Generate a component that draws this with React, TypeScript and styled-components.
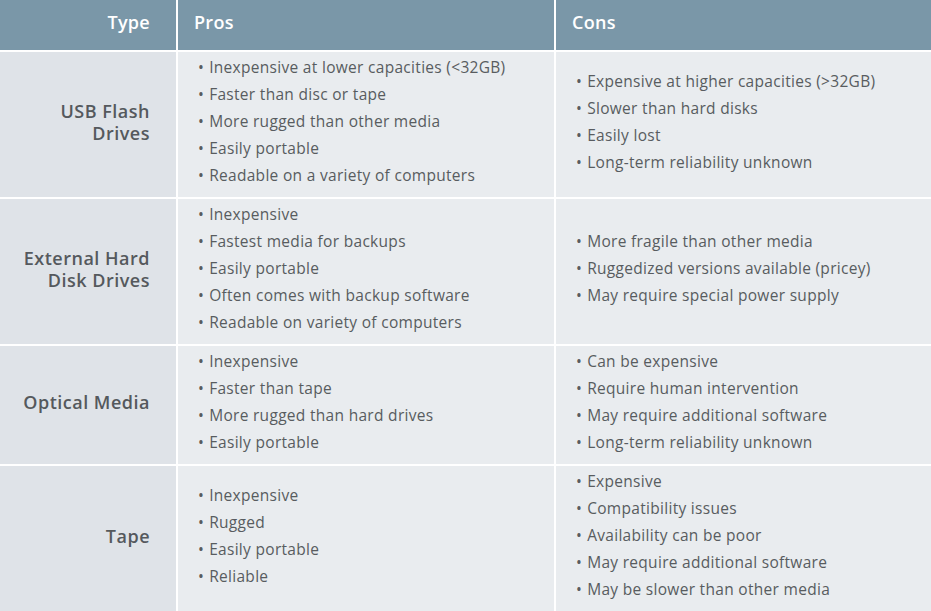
import React from 'react';
import styled, { createGlobalStyle } from 'styled-components';

const GlobalStyle = createGlobalStyle`
  html, body {
    margin: 0;
    padding: 0;
    background: #ffffff;
  }
  body {
    font-family: 'Open Sans', 'Liberation Sans', sans-serif;
    color: #585c60;
  }
`;

interface RowData {
  type: string[];
  pros: string[];
  cons: string[];
}

const rows: RowData[] = [
  {
    type: ['USB Flash', 'Drives'],
    pros: [
      'Inexpensive at lower capacities (<32GB)',
      'Faster than disc or tape',
      'More rugged than other media',
      'Easily portable',
      'Readable on a variety of computers'
    ],
    cons: [
      'Expensive at higher capacities (>32GB)',
      'Slower than hard disks',
      'Easily lost',
      'Long-term reliability unknown'
    ]
  },
  {
    type: ['External Hard', 'Disk Drives'],
    pros: [
      'Inexpensive',
      'Fastest media for backups',
      'Easily portable',
      'Often comes with backup software',
      'Readable on variety of computers'
    ],
    cons: [
      'More fragile than other media',
      'Ruggedized versions available (pricey)',
      'May require special power supply'
    ]
  },
  {
    type: ['Optical Media'],
    pros: ['Inexpensive', 'Faster than tape', 'More rugged than hard drives', 'Easily portable'],
    cons: [
      'Can be expensive',
      'Require human intervention',
      'May require additional software',
      'Long-term reliability unknown'
    ]
  },
  {
    type: ['Tape'],
    pros: ['Inexpensive', 'Rugged', 'Easily portable', 'Reliable'],
    cons: [
      'Expensive',
      'Compatibility issues',
      'Availability can be poor',
      'May require additional software',
      'May be slower than other media'
    ]
  }
];

const Table = styled.div`
  display: grid;
  grid-template-columns: 176px 376px 1fr;
  column-gap: 2px;
  row-gap: 2px;
  width: 931px;
  background: #ffffff;
`;

const HeadCell = styled.div<{ $right?: boolean }>`
  height: 50px;
  background: #7a97a8;
  color: #ffffff;
  font-weight: 600;
  font-size: 18px;
  letter-spacing: 0.3px;
  display: flex;
  align-items: center;
  justify-content: ${({ $right }) => ($right ? 'flex-end' : 'flex-start')};
  padding: ${({ $right }) => ($right ? '0 26px 6px 0' : '0 0 6px 16px')};
  box-sizing: border-box;
`;

const TypeCell = styled.div`
  background: #dfe3e8;
  display: flex;
  flex-direction: column;
  justify-content: center;
  align-items: flex-end;
  padding: 2px 26px 8px 0;
  font-weight: 600;
  font-size: 18px;
  letter-spacing: 0.5px;
  line-height: 22px;
  text-align: right;
  color: #55595d;
`;

const ListCell = styled.ul`
  margin: 0;
  background: #e9ecef;
  list-style: none;
  display: flex;
  flex-direction: column;
  justify-content: center;
  padding: 2px 0 8px 20px;
  font-size: 15.5px;
  letter-spacing: 0.3px;
  line-height: 27px;
`;

const Item = styled.li`
  white-space: nowrap;
  &::before {
    content: '•';
    margin-right: 5px;
  }
`;

export default function App() {
  return (
    <>
      <GlobalStyle />
      <Table>
        <HeadCell $right>Type</HeadCell>
        <HeadCell>Pros</HeadCell>
        <HeadCell>Cons</HeadCell>
        {rows.map((row) => (
          <React.Fragment key={row.type.join(' ')}>
            <TypeCell>
              {row.type.map((line) => (
                <div key={line}>{line}</div>
              ))}
            </TypeCell>
            <ListCell>
              {row.pros.map((p) => (
                <Item key={p}>{p}</Item>
              ))}
            </ListCell>
            <ListCell>
              {row.cons.map((c) => (
                <Item key={c}>{c}</Item>
              ))}
            </ListCell>
          </React.Fragment>
        ))}
      </Table>
    </>
  );
}
